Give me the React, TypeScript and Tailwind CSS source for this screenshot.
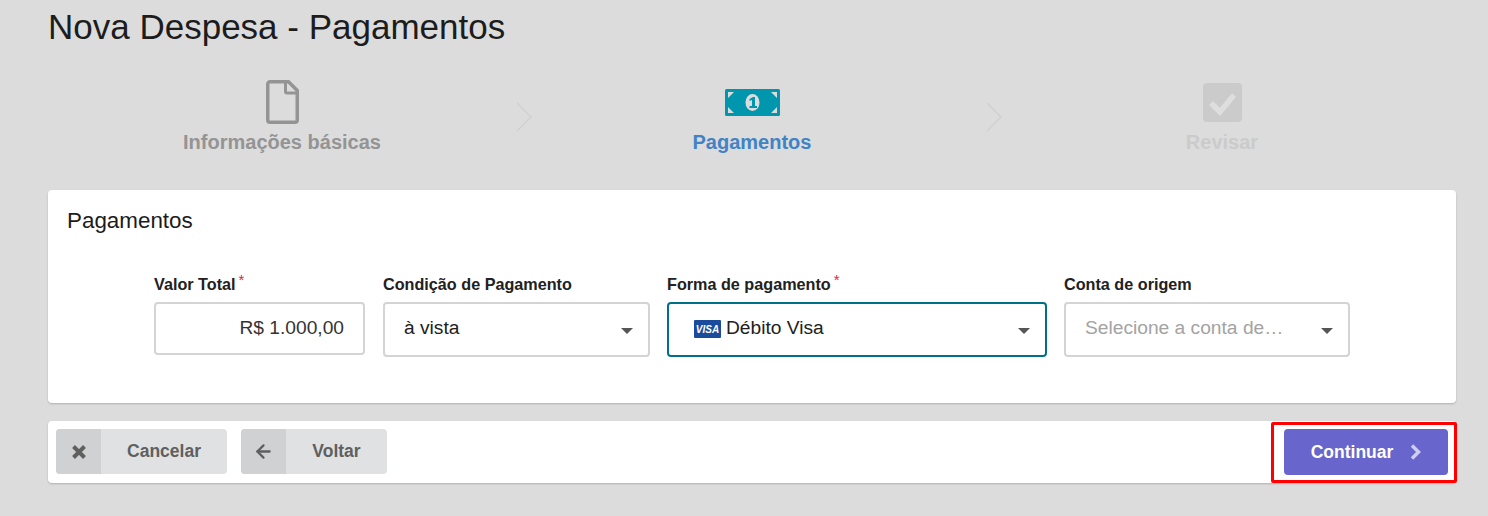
import { ArrowLeft } from 'lucide-react';
import type { ReactNode } from 'react';

function Chevron() {
  return (
    <svg className="h-[30px] w-4 shrink-0" viewBox="0 0 16 30" fill="none" stroke="#cfcfcf" strokeWidth={1.2}>
      <path d="M1 1l14 14L1 29" />
    </svg>
  );
}

function DocIcon() {
  return (
    <svg className="h-[44px] w-[33px]" viewBox="0 0 33 44" fill="none">
      <path
        d="M4 1.75h18.5l8.75 8.75V40a2.25 2.25 0 0 1-2.25 2.25H4A2.25 2.25 0 0 1 1.75 40V4A2.25 2.25 0 0 1 4 1.75z"
        stroke="#949494"
        strokeWidth={3.5}
      />
      <path d="M19.5 2v9.5a1.5 1.5 0 0 0 1.5 1.5h10" stroke="#949494" strokeWidth={3} />
    </svg>
  );
}

function MoneyIcon() {
  return (
    <svg className="h-[27px] w-[55px]" viewBox="0 0 55 27">
      <rect width="55" height="27" rx="1.5" fill="#0097ae" />
      <path d="M3 3h6L3 9zM52 3h-6l6 6zM3 24h6l-6-6zM52 24h-6l6-6z" fill="#dcdcdc" />
      <ellipse cx="27.5" cy="13.5" rx="7" ry="8.5" fill="#dcdcdc" />
      <path d="M24.5 10l3.5-2h2v9h2v2h-7.5v-2h2.5v-6l-2.5 1z" fill="#0097ae" />
    </svg>
  );
}

function CheckIcon() {
  return (
    <svg className="h-[39px] w-[39px]" viewBox="0 0 39 39">
      <rect width="39" height="39" rx="4" fill="#cbcbcb" />
      <path d="M8 20l9 9L31 12" fill="none" stroke="#dedede" strokeWidth={5.5} />
    </svg>
  );
}

function Step({ icon, label, color }: { icon: ReactNode; label: string; color: string }) {
  return (
    <div className="flex flex-1 flex-col items-center">
      <div className="flex h-[44px] items-center">{icon}</div>
      <span className={`mt-[6px] text-[20px] leading-[24px] font-bold ${color}`}>{label}</span>
    </div>
  );
}

function Field({ label, required, width, children }: { label: string; required?: boolean; width: string; children: ReactNode }) {
  return (
    <div className={`flex flex-col ${width}`}>
      <div className="flex h-[29px] items-start pt-[1px]">
        <span className="text-[16.2px] leading-[20px] font-bold text-[#212121]">{label}</span>
        {required && <span className="-mt-[1px] ml-[3px] text-[15px] leading-[14px] text-[#e0243c]">*</span>}
      </div>
      {children}
    </div>
  );
}

function Select({ children, focused }: { children: ReactNode; focused?: boolean }) {
  return (
    <div
      className={`flex h-[55px] items-center rounded-[4px] border-2 bg-white pr-[15px] pl-[19px] text-[19.2px] ${
        focused ? 'border-[#00708a]' : 'border-[#d4d4d4]'
      }`}
    >
      <div className="flex min-w-0 flex-1 items-center pb-[3px]">{children}</div>
      <span className="mt-[3px] h-0 w-0 border-x-[6px] border-t-[6px] border-x-transparent border-t-[#555555]" />
    </div>
  );
}

function GrayButton({ icon, label, width }: { icon: ReactNode; label: string; width: string }) {
  return (
    <div className={`flex h-[45px] overflow-hidden rounded-[4px] bg-[#e0e1e2] ${width}`}>
      <div className="flex w-[45px] items-center justify-center bg-[#d0d1d2] text-[#5f5f5f]">{icon}</div>
      <div className="flex flex-1 items-center justify-center text-[17.5px] font-bold text-[#5f5f5f]">{label}</div>
    </div>
  );
}

export default function App() {
  return (
    <div className="h-[516px] overflow-hidden bg-[#dcdcdc] pr-[32px] pl-[48px] font-['Liberation_Sans',Arial,sans-serif] text-[#212121]">
      <h1 className="pt-[7px] text-[35px] leading-[40px] text-[#1c1c1c]">Nova Despesa - Pagamentos</h1>

      {/* Steps */}
      <div className="mt-[33px] -mx-[1px] flex h-[102px] items-start">
        <Step icon={<DocIcon />} label="Informações básicas" color="text-[#949494]" />
        <div className="mt-[22px] -mr-[15px] -ml-[1px]"><Chevron /></div>
        <Step icon={<MoneyIcon />} label="Pagamentos" color="text-[#4183c4]" />
        <div className="mt-[22px] -mr-[15px] -ml-[1px]"><Chevron /></div>
        <Step icon={<CheckIcon />} label="Revisar" color="text-[#cbcbcb]" />
      </div>

      {/* Payment card */}
      <div className="mt-[8px] h-[213px] rounded-[4px] bg-white pt-[18px] pl-[19px] shadow-[0_1px_2px_rgba(0,0,0,0.2)]">
        <h2 className="text-[22.4px] leading-[26px] text-[#1c1c1c]">Pagamentos</h2>
        <div className="mt-[39px] ml-[87px] flex gap-[17px]">
          <Field label="Valor Total" required width="w-[212px]">
            <div className="flex h-[53px] w-[211px] items-center justify-end rounded-[4px] border-2 border-[#d4d4d4] bg-white pr-[19px] text-[19.2px] text-[#333333]">
              R$ 1.000,00
            </div>
          </Field>
          <Field label="Condição de Pagamento" width="w-[267px]">
            <Select>à vista</Select>
          </Field>
          <Field label="Forma de pagamento" required width="w-[380px]">
            <Select focused>
              <span className="mt-[3px] mr-[5px] ml-[6px] flex h-[18px] w-[27px] items-center justify-center rounded-[1px] bg-[#1a4b9c] text-[10px] font-bold italic text-white">
                VISA
              </span>
              Débito Visa
            </Select>
          </Field>
          <Field label="Conta de origem" width="w-[286px]">
            <Select>
              <span className="mr-[33px] truncate text-[#a3a3a3]">Selecione a conta de origem</span>
            </Select>
          </Field>
        </div>
      </div>

      {/* Footer */}
      <div className="relative mt-[18px] flex h-[62px] items-start justify-between rounded-[4px] bg-white px-[8px] pt-[8px] shadow-[0_1px_2px_rgba(0,0,0,0.2)]">
        <div className="flex gap-[14px]">
          <GrayButton
            icon={
              <svg className="h-[14px] w-[14px]" viewBox="0 0 14 14" fill="none" stroke="currentColor" strokeWidth={4}>
                <path d="M1.5 1.5l11 11M12.5 1.5l-11 11" />
              </svg>
            }
            label="Cancelar"
            width="w-[171px]"
          />
          <GrayButton icon={<ArrowLeft size={21} strokeWidth={2.6} />} label="Voltar" width="w-[146px]" />
        </div>
        <div className="flex h-[46px] w-[164px] items-center justify-center gap-[17px] rounded-[4px] bg-[#6866cc] text-[17.5px] font-bold text-white">
          Continuar
          <svg className="h-[16px] w-[11px]" viewBox="0 0 11 16" fill="none" stroke="#cfcef0" strokeWidth={3.5}>
            <path d="M2 1.5L8.5 8L2 14.5" />
          </svg>
        </div>
        <div className="absolute top-[1px] -right-[1px] h-[61px] w-[186px] rounded-[2px] border-[3px] border-[#ff0000]" />
      </div>
    </div>
  );
}
